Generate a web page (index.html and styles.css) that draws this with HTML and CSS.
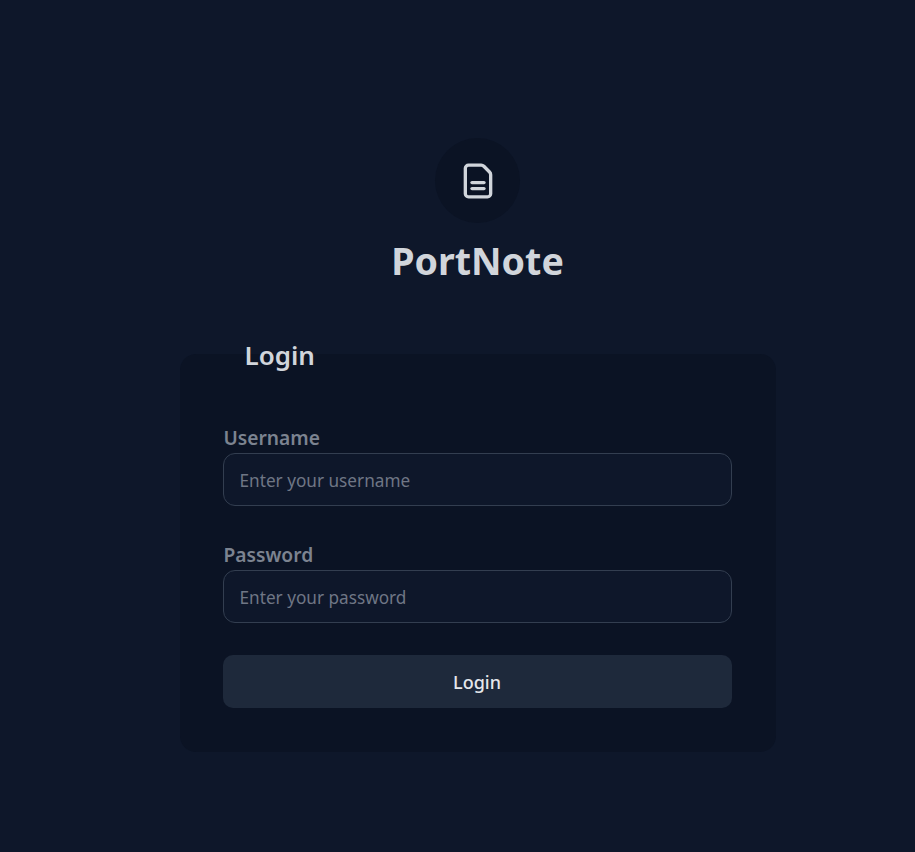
FILE: index.html
```html
<!DOCTYPE html>
<html lang="en">
<head>
<meta charset="utf-8">
<title>PortNote Login</title>
<link rel="stylesheet" href="styles.css">
</head>
<body>
<main class="page">
  <div class="brand">
    <div class="logo">
      <svg class="logo-icon" viewBox="0 0 24 24" width="38" height="38" fill="none" stroke="currentColor" stroke-width="2.1" stroke-linecap="round" stroke-linejoin="round">
        <path d="M6 22a2 2 0 0 1-2-2V4a2 2 0 0 1 2-2h8a2.4 2.4 0 0 1 1.704.706l3.588 3.588A2.4 2.4 0 0 1 20 8v12a2 2 0 0 1-2 2z"/>
        <path d="M8.2 13h7.6"/>
        <path d="M8.2 16.8h7.6"/>
      </svg>
    </div>
    <h1 class="title">PortNote</h1>
  </div>
  <form class="card">
    <fieldset class="fieldset">
      <legend class="legend">Login</legend>
      <div class="field">
        <label class="label" for="username">Username</label>
        <input class="input" id="username" type="text" placeholder="Enter your username">
      </div>
      <div class="field">
        <label class="label" for="password">Password</label>
        <input class="input" id="password" type="password" placeholder="Enter your password">
      </div>
      <button class="button" type="button">Login</button>
    </fieldset>
  </form>
</main>
</body>
</html>
```
FILE: styles.css
```css
* { box-sizing: border-box; }
html, body { margin: 0; height: 100%; }
body {
  background: #0e172a;
  color: #d1d5db;
  font-family: "Noto Sans", "Open Sans", sans-serif;
}
.page {
  display: flex;
  flex-direction: column;
  align-items: center;
  padding: 138px 0 0 40px;
}
.brand {
  display: flex;
  flex-direction: column;
  align-items: center;
}
.logo {
  width: 85px;
  height: 85px;
  border-radius: 50%;
  background: #0b1324;
  display: flex;
  align-items: center;
  justify-content: center;
  color: #d1d5db;
}
.title {
  margin: 12px 0 0;
  font-size: 37.6px;
  line-height: 52px;
  font-weight: 700;
  color: #d1d5db;
}
.card {
  width: 596px;
  margin-top: 47px;
}
.fieldset {
  margin: 0;
  border: 0;
  border-radius: 16px;
  background: #0b1324;
  padding: 48px 44px 44px 43px;
  min-width: 0;
}
.legend {
  margin-left: 16px;
  padding: 3px 6px 0;
  font-size: 26px;
  line-height: 36px;
  font-weight: 600;
  color: #d1d5db;
}
.field {
  display: flex;
  flex-direction: column;
  margin-bottom: 32px;
}
.label {
  font-size: 19.2px;
  line-height: 26px;
  padding: 4px 0 2px 1px;
  font-weight: 600;
  color: #7c8390;
}
.input {
  height: 53px;
  width: 100%;
  padding: 2px 16px 0;
  border: 1px solid #333e50;
  border-radius: 12px;
  background: #0e172a;
  color: #d1d5db;
  font: inherit;
  font-size: 17.2px;
  outline: none;
}
.input::placeholder { color: #6f7685; opacity: 1; }
.button {
  display: block;
  width: 100%;
  height: 53px;
  border: 0;
  border-radius: 10px;
  background: #1e293b;
  color: #e5e7eb;
  font: inherit;
  font-size: 18px;
  font-weight: 500;
}
```
